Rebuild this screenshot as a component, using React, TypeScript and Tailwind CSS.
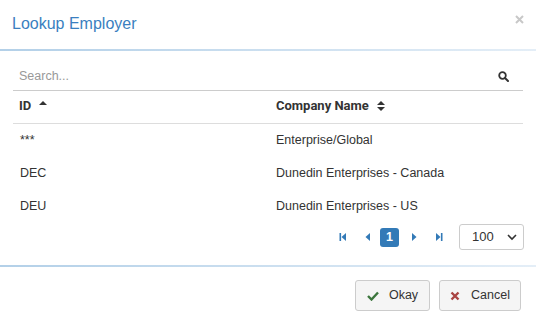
import React from "react";

function SortUp() {
  return (
    <svg width="8" height="6" viewBox="0 0 8 6" className="ml-[8px] -mt-[6px]">
      <path d="M0 5 L4 1 L8 5 Z" fill="#333" />
    </svg>
  );
}

function SortBoth() {
  return (
    <svg width="8" height="12" viewBox="0 0 8 12" className="ml-[8px]">
      <path d="M0 5 L4 1 L8 5 Z" fill="#333" />
      <path d="M0 7 L4 11 L8 7 Z" fill="#333" />
    </svg>
  );
}

function PagerIcon({ kind }: { kind: "first" | "prev" | "next" | "last" }) {
  const c = "#337ab7";
  return (
    <svg width="8" height="10" viewBox="0 0 8 10">
      {kind === "first" && (
        <>
          <rect x="0.5" y="1" width="1.6" height="8" fill={c} />
          <path d="M7 1 L2.5 5 L7 9 Z" fill={c} />
        </>
      )}
      {kind === "prev" && <path d="M6 1 L1.5 5 L6 9 Z" fill={c} />}
      {kind === "next" && <path d="M2 1 L6.5 5 L2 9 Z" fill={c} />}
      {kind === "last" && (
        <>
          <path d="M1 1 L5.5 5 L1 9 Z" fill={c} />
          <rect x="5.9" y="1" width="1.6" height="8" fill={c} />
        </>
      )}
    </svg>
  );
}

export default function App() {
  const rows: [string, string][] = [
    ["***", "Enterprise/Global"],
    ["DEC", "Dunedin Enterprises - Canada"],
    ["DEU", "Dunedin Enterprises - US"],
  ];
  return (
    <div
      className="w-[536px] h-[321px] bg-white flex flex-col text-[#333]"
      style={{ fontFamily: '"Liberation Sans", Arial, sans-serif' }}
    >
      <div className="h-[49px] flex items-center justify-between pl-[12px] pr-[12px]">
        <span className="text-[16px] text-[#3a7fc0] leading-none -mt-[1px]">Lookup Employer</span>
        <svg width="9" height="9" viewBox="0 0 9 9" className="-mt-[11px]">
          <path d="M1 1 L8 8 M8 1 L1 8" stroke="#c8c8c8" strokeWidth="2" />
        </svg>
      </div>
      <div className="h-[2px] bg-gradient-to-r from-[#b3d0e8] to-[#e4eef7]" />
      <div className="px-[13px] flex flex-col">
        <div className="h-[40px] pt-[12px] flex items-center justify-between border-b border-[#cccccc] pl-[6px] pr-[13px]">
          <span className="text-[12.5px] text-[#999]">Search...</span>
          <svg width="11" height="11" viewBox="0 0 11 11" className="-mt-[1px] mr-[1px]">
            <circle cx="4.5" cy="4.5" r="3.3" fill="none" stroke="#333" strokeWidth="1.8" />
            <path d="M7 7 L10 10" stroke="#333" strokeWidth="2" strokeLinecap="round" />
          </svg>
        </div>
        <div
          className="h-[33px] pb-[2px] flex items-center border-b border-[#dddddd] text-[13px] font-bold"
          style={{ fontFamily: 'Roboto, "Liberation Sans", sans-serif' }}
        >
          <div className="w-[263px] pl-[6px] flex items-center">
            ID
            <SortUp />
          </div>
          <div className="flex items-center">
            Company Name
            <SortBoth />
          </div>
        </div>
        {rows.map((r, i) => (
          <div key={i} className="h-[33px] flex items-center text-[12.5px]">
            <div className="w-[263px] pl-[7px]">{r[0]}</div>
            <div>{r[1]}</div>
          </div>
        ))}
        <div className="h-[28px] flex items-center justify-end">
          <div className="flex items-center mr-[10px]">
            <div className="w-[26px] flex justify-center"><PagerIcon kind="first" /></div>
            <div className="w-[24px] flex justify-center"><PagerIcon kind="prev" /></div>
            <div className="w-[19px] h-[19px] rounded-[3px] bg-[#337ab7] text-white text-[12.5px] flex items-center justify-center font-bold">1</div>
            <div className="w-[29px] flex justify-center"><PagerIcon kind="next" /></div>
            <div className="w-[21px] flex justify-center"><PagerIcon kind="last" /></div>
          </div>
          <div className="w-[65px] h-[26px] border border-[#cccccc] rounded-[3px] flex items-center justify-between pl-[12px] pr-[6px] text-[13px] mr-[-1px]">
            <span>100</span>
            <svg width="10" height="7" viewBox="0 0 10 7">
              <path d="M1 1 L5 5 L9 1" fill="none" stroke="#333" strokeWidth="1.6" />
            </svg>
          </div>
        </div>
      </div>
      <div className="mt-[14px] h-[2px] bg-gradient-to-r from-[#b3d0e8] to-[#e4eef7]" />
      <div className="flex justify-end gap-[9px] pr-[15px] pt-[13px]">
        <button className="w-[75px] h-[31px] bg-[#f5f5f5] border border-[#cccccc] rounded-[3px] flex items-center justify-center gap-[10px] text-[12.5px] text-[#333]">
          <svg width="12" height="10" viewBox="0 0 12 10">
            <path d="M1 5 L4.5 8.5 L11 1.5" fill="none" stroke="#3c763d" strokeWidth="2.4" />
          </svg>
          Okay
        </button>
        <button className="w-[82px] h-[31px] bg-[#f5f5f5] border border-[#cccccc] rounded-[3px] flex items-center justify-center gap-[11px] text-[12.5px] text-[#333]">
          <svg width="10" height="10" viewBox="0 0 10 10">
            <path d="M1.5 1.5 L8.5 8.5 M8.5 1.5 L1.5 8.5" stroke="#a94442" strokeWidth="2.4" />
          </svg>
          Cancel
        </button>
      </div>
    </div>
  );
}
